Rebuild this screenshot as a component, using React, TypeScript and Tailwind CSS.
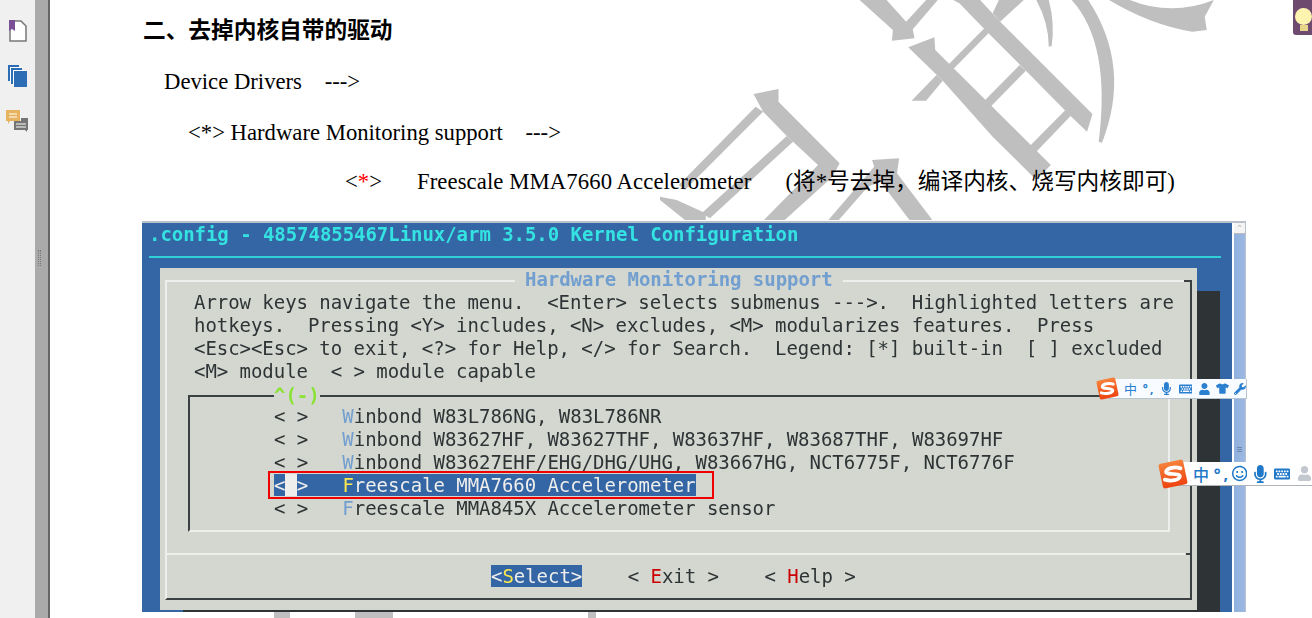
import React from 'react';
import { FaMicrophone, FaKeyboard, FaTshirt, FaWrench, FaUser, FaRegSmile } from 'react-icons/fa';

// Watermark strokes, drawn behind the page text
const watermark = [
  'M480 0 L560 90 L558 122 L612 115 L608 88 L668 0 L640 0 L592 65 L545 0Z',
  'M705 0 L770 0 L818 65 L1040 342 L1027 395 L985 345 L880 212 L790 100 L720 10Z',
  'M597 142 L660 112 L662 150 L940 495 L905 540 L800 410 L680 242Z',
  'M605 302 L640 302 L680 242 L665 225Z',
  'M695 192 L780 85 L790 100 L705 208Z',
  'M780 302 L865 195 L880 212 L795 320Z',
  'M890 437 L975 330 L988 347 L905 455Z',
  'M818 65 L875 0 L815 0 L800 40Z',
  'M905 0 Q935 70 935 140 L942 138 Q950 70 935 0Z',
  'M990 0 Q1085 130 1055 425 L1063 428 Q1135 200 1030 0Z',
  'M1080 0 Q1180 75 1280 95 L1315 90 L1310 50 L1332 0 Q1230 50 1130 0Z',
  'M225 282 L285 267 L285 305 L432 490 L415 530 L300 660 L250 660 L380 495 L320 425 L305 408 L248 335Z',
  'M230 320 L248 335 L60 570 L45 555Z',
  'M305 408 L320 425 L120 655 L100 640Z',
  'M0 590 L40 600 L110 640 L110 660 L60 660 L0 600Z',
  'M510 480 L575 475 L570 520 L655 660 L600 660 L530 545 L500 560 L430 660 L405 660 L515 500Z',
];

function BookmarkIcon() {
  return (
    <svg width="18" height="22" viewBox="0 0 18 22">
      <path d="M1 1H12L17 6V21H1Z" fill="#fff" stroke="#777" strokeWidth="1.5" />
      <path d="M0 0H6V11L3 9L0 11Z" fill="#7b4f96" />
    </svg>
  );
}

function PagesIcon() {
  return (
    <svg width="19" height="22" viewBox="0 0 19 22">
      <rect x="0" y="0" width="11" height="16" fill="#2d6db5" />
      <rect x="2" y="2" width="11" height="16" fill="#fff" />
      <rect x="3" y="3" width="11" height="16" fill="#2d6db5" />
      <rect x="5" y="5" width="13" height="16" fill="#fff" />
      <rect x="6" y="6" width="13" height="16" fill="#2d6db5" />
    </svg>
  );
}

function CommentsIcon() {
  return (
    <svg width="23" height="23" viewBox="0 0 23 23">
      <path d="M0 0H14V11H4L2 14V11H0Z" fill="#e8b35f" />
      <path d="M3 4H11M3 7H11" stroke="#fff" strokeWidth="1" />
      <path d="M15 8H22V20H21V22L19 20H8V11H15Z" fill="#757575" />
      <path d="M10 14H20M10 17H20" stroke="#fff" strokeWidth="1" />
    </svg>
  );
}

function SogouLogo({ className }: { className: string }) {
  return (
    <svg className={className} viewBox="0 0 24 24">
      <defs>
        <linearGradient id="sogou" x1="0" y1="0" x2="0" y2="1">
          <stop offset="0" stopColor="#f6823a" />
          <stop offset="1" stopColor="#ee4310" />
        </linearGradient>
      </defs>
      <rect x="2" y="2" width="20" height="20" rx="2" fill="url(#sogou)" transform="rotate(-12 12 12)" />
      <path
        d="M18 7.5C14 6 7 7 6.5 10C6 13 17.5 11 17.5 14C17 17 10 18 5.5 16.5"
        fill="none"
        stroke="#fff"
        strokeWidth="3"
        strokeLinecap="round"
      />
    </svg>
  );
}

function Row({ hot, rest, selected }: { hot: string; rest: string; selected?: boolean }) {
  if (selected) {
    return (
      <div className="h-[23px] pl-[84px]">
        <span className="bg-[#3465a4] text-[#eeeeec]">
          {'<'}
          <span className="bg-[#eeeeec]"> </span>
          {'>   '}
          <span className="text-[#fce94f]">{hot}</span>
          {rest}
        </span>
      </div>
    );
  }
  return (
    <div className="h-[23px] pl-[84px]">
      {'< >   '}
      <span className="text-[#729fcf]">{hot}</span>
      {rest}
    </div>
  );
}

export default function App() {
  return (
    <div className="relative flex h-[618px] w-[1312px] overflow-hidden bg-white">
      {/* Viewer sidebar */}
      <aside className="flex w-[35px] shrink-0 flex-col items-center gap-[23px] bg-[#f0f0f0] pt-[20px]">
        <BookmarkIcon />
        <PagesIcon />
        <CommentsIcon />
      </aside>
      <div className="relative w-[15px] shrink-0 border-r-2 border-[#666] bg-[#aaaaaa]">
        <div className="absolute left-[3px] top-[250px] h-[16px] w-[3px] border-x border-dotted border-[#777]" />
      </div>

      {/* Document page */}
      <main className="relative flex-1">
        <svg className="absolute inset-0 h-full w-full" viewBox="50 0 1262 618">
          <g transform="translate(660 0) scale(0.4158 0.3333)" fill="#bfbfbf">
            {watermark.map((d) => (
              <path key={d} d={d} />
            ))}
          </g>
          <rect x="274" y="612" width="16" height="6" fill="#bfbfbf" />
          <rect x="355" y="612" width="38" height="6" fill="#bfbfbf" />
          <rect x="588" y="612" width="8" height="6" fill="#bfbfbf" />
        </svg>

        <div className="relative flex flex-col font-['Liberation_Serif','Noto_Sans_CJK_SC',serif] text-[22.7px] text-black">
          <h2 className="ml-[93px] mt-[16px] h-[25px] text-[22.7px] font-bold leading-[25px] font-['Noto_Sans_CJK_SC',sans-serif]">
            二、去掉内核自带的驱动
          </h2>
          <p className="ml-[114px] mt-[28px] h-[25px] leading-[25px] whitespace-pre">Device Drivers    ---&gt;</p>
          <p className="ml-[138px] mt-[26px] h-[25px] leading-[25px] whitespace-pre">&lt;*&gt; Hardware Monitoring support    ---&gt;</p>
          <p className="ml-[295px] mt-[24px] h-[25px] leading-[25px] whitespace-pre">
            &lt;<span className="text-[#ff0000]">*</span>&gt;{'      '}<span className="ml-[1px] tracking-[0.1px]">Freescale MMA7660 Accelerometer</span>{'      '}(将*号去掉，编译内核、烧写内核即可)
          </p>

          {/* Kernel menuconfig screenshot */}
          <div className="ml-[92px] mt-[27px] flex h-[391px] w-[1104px] overflow-hidden border-t-2 border-[#b9c2cc] font-['DejaVu_Sans_Mono',monospace] text-[19px] leading-[23px] tracking-[-0.046px] text-[#2e3436] blur-[0.4px] whitespace-pre">
            <div className="w-[1090px] shrink-0 bg-[#3465a4]">
              <div className="h-[23px] pl-[7px] font-bold text-[#34e2e2]">.config - 48574855467Linux/arm 3.5.0 Kernel Configuration</div>
              <div className="ml-[7px] mt-[10px] h-[2px] w-[1072px] bg-[#2fd0d8]" />
              <div className="ml-[18px] mt-[10px] h-[342px] w-[1037px] bg-[#d3d7cf] shadow-[23px_23px_0_0_#2e3436]">
                {/* Dialog frame */}
                <div className="relative ml-[5px] h-[320px] w-[1027px] translate-y-[12px] border-2 border-b-[#3b4143] border-l-[#eeeeec] border-r-[#3b4143] border-t-[#eeeeec]">
                  <div className="absolute left-[348px] top-[-14px] bg-[#d3d7cf] px-[10px] font-bold text-[#729fcf]">Hardware Monitoring support</div>
                  <div className="absolute right-[-2px] top-[-2px] h-[2px] w-[8px] bg-[#3b4143]" />
                  <div className="pl-[27px] pt-[9px]">
                    {'Arrow keys navigate the menu.  <Enter> selects submenus --->.  Highlighted letters are\n'}
                    {'hotkeys.  Pressing <Y> includes, <N> excludes, <M> modularizes features.  Press\n'}
                    {'<Esc><Esc> to exit, <?> for Help, </> for Search.  Legend: [*] built-in  [ ] excluded\n'}
                    {'<M> module  < > module capable'}
                  </div>

                  {/* Option list */}
                  <div className="relative ml-[21px] mt-[12px] h-[137px] w-[982px] border-2 border-b-[#eeeeec] border-l-[#3b4143] border-r-[#eeeeec] border-t-[#3b4143] pt-[8px]">
                    <div className="absolute left-[84px] top-[-13px] bg-[#d3d7cf] font-bold text-[#8ae234]">^(-)</div>
                    <Row hot="W" rest="inbond W83L786NG, W83L786NR" />
                    <Row hot="W" rest="inbond W83627HF, W83627THF, W83637HF, W83687THF, W83697HF" />
                    <Row hot="W" rest="inbond W83627EHF/EHG/DHG/UHG, W83667HG, NCT6775F, NCT6776F" />
                    <Row hot="F" rest="reescale MMA7660 Accelerometer" selected />
                    <Row hot="F" rest="reescale MMA845X Accelerometer sensor" />
                  </div>

                  <div className="relative mt-[21px] h-[2px] w-[1018px] bg-[#eeeeec]">
                    <div className="absolute right-[-7px] top-0 h-[2px] w-[6px] bg-[#3b4143]" />
                  </div>

                  <div className="mt-[10px] pl-[324px]">
                    <span className="bg-[#3465a4] text-[#eeeeec]">
                      {'<'}<span className="text-[#fce94f]">S</span>{'elect>'}
                    </span>
                    {'    < '}<span className="text-[#cc0000]">E</span>{'xit >    < '}<span className="text-[#cc0000]">H</span>{'elp >'}
                  </div>
                </div>
              </div>
            </div>

            {/* Scrollbar */}
            <div className="ml-[2px] flex w-[12px] flex-col border-r border-[#b9c2cc] bg-gradient-to-r from-[#8fb0de] to-[#9db9e2]">
              <div className="flex h-[11px] items-center justify-center border-b border-[#bbb] bg-[#f4f4f4] text-[7px] leading-none text-[#999]">^</div>
              <div className="mt-[213px] flex flex-col items-center gap-[1px]">
                <div className="h-px w-[5px] bg-[#6f86a8]" />
                <div className="h-px w-[5px] bg-[#6f86a8]" />
                <div className="h-px w-[5px] bg-[#6f86a8]" />
              </div>
            </div>
          </div>
        </div>
      </main>

      {/* Red annotation round the selected row */}
      <div className="absolute left-[268px] top-[471px] h-[28px] w-[446px] border-2 border-[#f00000]" />

      {/* Small input method bar */}
      <div className="absolute left-[1108px] top-[379px] flex h-[20px] w-[139px] items-center border-b border-r border-[#b8c4d0] bg-[#f8fbff] pl-[16px] text-[#2a7fd0]">
        <span className="w-[19px] font-['Noto_Sans_CJK_SC',sans-serif] text-[13px] leading-none">中</span>
        <span className="w-[18px] text-[12px] font-bold leading-none tracking-[2px]">°,</span>
        <FaMicrophone className="mr-[7px] h-[13px] w-[11px]" />
        <FaKeyboard className="mr-[6px] h-[14px] w-[14px]" />
        <FaUser className="mr-[5px] h-[12px] w-[13px]" />
        <FaTshirt className="mr-[5px] h-[13px] w-[13px]" />
        <FaWrench className="h-[12px] w-[12px]" />
      </div>
      <SogouLogo className="absolute left-[1096px] top-[377px] h-[23px] w-[23px]" />

      {/* Large input method bar */}
      <div className="absolute left-[1173px] top-[462px] flex h-[24px] w-[139px] items-center overflow-hidden border-b border-[#b0b4bb] bg-white pl-[20px] text-[#1f78c8]">
        <span className="w-[23px] font-['Noto_Sans_CJK_SC',sans-serif] text-[16px] font-medium leading-none">中</span>
        <span className="w-[20px] text-[16px] font-bold leading-none tracking-[3px]">°,</span>
        <FaRegSmile className="mr-[7px] h-[17px] w-[17px]" />
        <FaMicrophone className="mr-[7px] h-[18px] w-[14px]" />
        <FaKeyboard className="mr-[7px] h-[18px] w-[18px]" />
        <FaUser className="h-[15px] w-[15px] shrink-0 text-[#c3c8d0]" />
      </div>
      <SogouLogo className="absolute left-[1158px] top-[459px] h-[30px] w-[30px]" />

      {/* Viewer hint badge */}
      <div className="absolute right-0 top-0 h-[35px] w-[19px] overflow-hidden rounded-bl-[3px] bg-[#6d4a6e]">
        <div className="ml-[2px] mt-[8px] h-[17px] w-[17px] rounded-full bg-[#fff3b0]" />
        <div className="ml-[7px] h-[6px] w-[8px] bg-[#e6d68a]" />
      </div>
    </div>
  );
}
